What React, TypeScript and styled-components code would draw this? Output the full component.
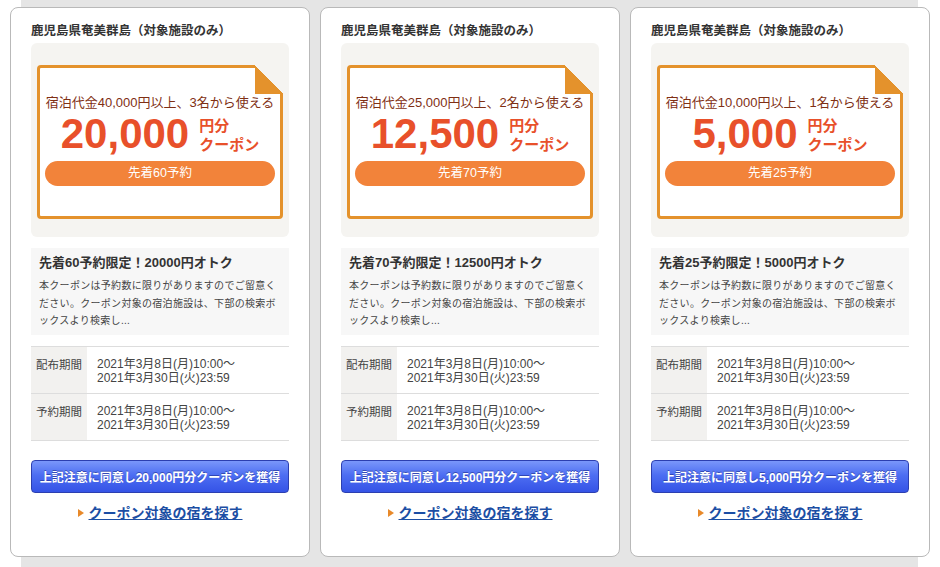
import React from 'react';
import styled, { createGlobalStyle } from 'styled-components';

const coupons = [
    { minPrice: '40,000', people: 3, amount: '20,000', limit: 60, plain: '20000' },
    { minPrice: '25,000', people: 2, amount: '12,500', limit: 70, plain: '12500' },
    { minPrice: '10,000', people: 1, amount: '5,000', limit: 25, plain: '5000' },
];

const periods = [
    { label: '配布期間', from: '2021年3月8日(月)10:00〜', to: '2021年3月30日(火)23:59' },
    { label: '予約期間', from: '2021年3月8日(月)10:00〜', to: '2021年3月30日(火)23:59' },
];

const Global = createGlobalStyle`
    body {
        margin: 0;
        background: #ffffff;
        font-family: "Liberation Sans", "Noto Sans CJK JP", sans-serif;
        color: #333333;
    }
`;

const Backdrop = styled.div`
    margin-left: 21px;
    width: 897px;
    height: 567px;
    background: #e5e5e5;
    padding-top: 7px;
    box-sizing: border-box;
`;

const Row = styled.div`
    display: flex;
    gap: 10px;
    margin: 0 -12px 0 -11px;
`;

const Card = styled.div`
    width: 300px;
    flex-shrink: 0;
    box-sizing: border-box;
    background: #ffffff;
    border: 1px solid #b9b9b9;
    border-radius: 8px;
    padding: 15px 20px 34px;
    display: flex;
    flex-direction: column;
`;

const Area = styled.div`
    font-size: 12.5px;
    font-weight: bold;
    line-height: 16px;
    color: #333;
    margin-bottom: 4px;
`;

const Panel = styled.div`
    background: #f5f4f1;
    border-radius: 6px;
    padding: 22px 6px 18px;
`;

const Coupon = styled.div`
    position: relative;
    background: #ffffff;
    border: 3px solid #e4922c;
    border-radius: 4px 0 4px 4px;
    padding: 26px 5px 30px;
    display: flex;
    flex-direction: column;
    align-items: center;

    &::after {
        content: '';
        position: absolute;
        top: -3px;
        right: -3px;
        width: 28px;
        height: 29px;
        background: linear-gradient(to bottom left, #f5f4f1 50%, #e4922c 50%);
    }
`;

const Condition = styled.div`
    font-size: 13px;
    line-height: 18px;
    color: #7f2f14;
    white-space: nowrap;
`;

const Amount = styled.div`
    display: flex;
    align-items: center;
    gap: 10px;
    height: 44px;
`;

const Figure = styled.span`
    font-family: "Liberation Sans", sans-serif;
    font-size: 42px;
    line-height: 44px;
    font-weight: bold;
    color: #e8502a;
`;

const Unit = styled.span`
    display: flex;
    flex-direction: column;
    font-size: 15px;
    line-height: 19px;
    font-weight: bold;
    color: #e8502a;
    margin-top: 2px;
`;

const Pill = styled.div`
    align-self: stretch;
    margin-top: 5px;
    height: 25px;
    border-radius: 13px;
    background: #f2833a;
    color: #ffffff;
    font-size: 12.5px;
    line-height: 25px;
    text-align: center;
`;

const Notice = styled.div`
    margin-top: 11px;
    background: #f7f7f7;
    padding: 7px 8px 5px;
`;

const NoticeTitle = styled.div`
    font-size: 13px;
    line-height: 16px;
    font-weight: bold;
    color: #333;
`;

const NoticeBody = styled.div`
    margin-top: 6px;
    font-size: 10px;
    letter-spacing: 0.3px;
    line-height: 17.5px;
    color: #444;
    line-break: anywhere;
`;

const Periods = styled.div`
    margin-top: 11px;
    border-top: 1px solid #dddddd;
`;

const PeriodRow = styled.div`
    display: flex;
    border-bottom: 1px solid #dddddd;
`;

const PeriodLabel = styled.div`
    width: 56px;
    flex-shrink: 0;
    background: #f2f1ef;
    font-size: 11.5px;
    line-height: 14px;
    padding: 11px 0 0 5px;
    box-sizing: border-box;
    color: #444;
`;

const PeriodValue = styled.div`
    padding: 10px 0 8px 10px;
    font-size: 12px;
    line-height: 14px;
    color: #444;
`;

const GetButton = styled.button`
    margin-top: 19px;
    height: 33px;
    width: 100%;
    border: 1px solid #2c3fb0;
    border-radius: 4px;
    background: linear-gradient(to bottom, #7a97fa 0%, #4d6ef2 45%, #3553e6 100%);
    color: #ffffff;
    font-family: "Liberation Sans", "Noto Sans CJK JP", sans-serif;
    font-size: 12px;
    font-weight: bold;
    text-shadow: 0 -1px 0 rgba(20, 30, 120, 0.5);
    padding: 0;
    cursor: pointer;
`;

const SearchLink = styled.a`
    margin-top: 11px;
    align-self: center;
    display: flex;
    align-items: center;
    gap: 5px;
    line-height: 18px;
    font-size: 14px;
    font-weight: bold;
    color: #1c4ea4;
    text-decoration: none;
    cursor: pointer;
`;

const Arrow = styled.span`
    width: 0;
    height: 0;
    border-top: 4px solid transparent;
    border-bottom: 4px solid transparent;
    border-left: 6px solid #e8892a;
`;

const LinkText = styled.span`
    text-decoration: underline;
`;

const CouponCard = ({ c }: { c: (typeof coupons)[number] }) => (
    <Card>
        <Area>鹿児島県奄美群島（対象施設のみ）</Area>
        <Panel>
            <Coupon>
                <Condition>
                    宿泊代金{c.minPrice}円以上、{c.people}名から使える
                </Condition>
                <Amount>
                    <Figure>{c.amount}</Figure>
                    <Unit>
                        <span>円分</span>
                        <span>クーポン</span>
                    </Unit>
                </Amount>
                <Pill>先着{c.limit}予約</Pill>
            </Coupon>
        </Panel>
        <Notice>
            <NoticeTitle>
                先着{c.limit}予約限定！{c.plain}円オトク
            </NoticeTitle>
            <NoticeBody>
                本クーポンは予約数に限りがありますのでご留意ください。クーポン対象の宿泊施設は、下部の検索ボックスより検索し...
            </NoticeBody>
        </Notice>
        <Periods>
            {periods.map(p => (
                <PeriodRow key={p.label}>
                    <PeriodLabel>{p.label}</PeriodLabel>
                    <PeriodValue>
                        {p.from}
                        <br />
                        {p.to}
                    </PeriodValue>
                </PeriodRow>
            ))}
        </Periods>
        <GetButton>上記注意に同意し{c.amount}円分クーポンを獲得</GetButton>
        <SearchLink>
            <Arrow />
            <LinkText>クーポン対象の宿を探す</LinkText>
        </SearchLink>
    </Card>
);

const App = () => (
    <>
        <Global />
        <Backdrop>
            <Row>
                {coupons.map(c => (
                    <CouponCard key={c.amount} c={c} />
                ))}
            </Row>
        </Backdrop>
    </>
);

export default App;
